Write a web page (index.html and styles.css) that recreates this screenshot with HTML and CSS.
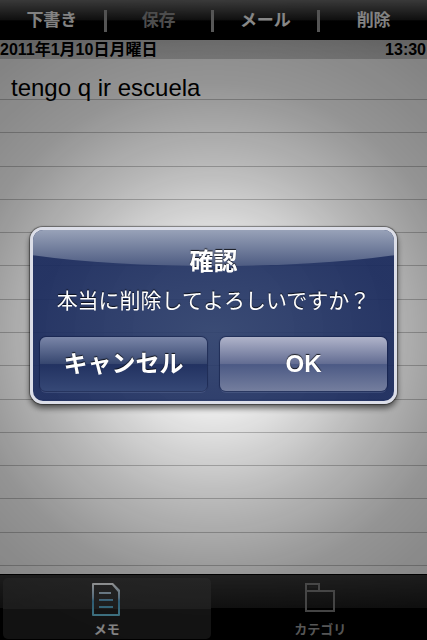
FILE: index.html
```html
<!DOCTYPE html>
<html lang="ja">
<head>
  <meta charset="UTF-8">
  <meta name="viewport" content="width=device-width, initial-scale=1">
  <title>メモ</title>
  <link rel="stylesheet" href="styles.css">
</head>
<body>
  <div class="app">
    <header class="toolbar">
      <button type="button">下書き</button>
      <button type="button" class="inactive">保存</button>
      <button type="button">メール</button>
      <button type="button">削除</button>
    </header>

    <div class="date-bar">
      <span>2011年1月10日月曜日</span>
      <span>13:30</span>
    </div>

    <main class="paper">
      <div class="rules">
        <i></i><i></i><i></i><i></i><i></i><i></i><i></i>
        <i></i><i></i><i></i><i></i><i></i><i></i><i></i>
      </div>
      <textarea class="note" aria-label="メモ">tengo q ir escuela</textarea>
    </main>

    <nav class="tabs">
      <a href="#memo" class="tab active">
        <svg width="30" height="36" viewBox="0 0 30 36">
          <defs>
            <linearGradient id="memoStroke" x1="0" y1="0" x2="0" y2="1">
              <stop offset="0" stop-color="#f2f2f2"/>
              <stop offset="0.45" stop-color="#90b8d4"/>
              <stop offset="0.55" stop-color="#4e9cc4"/>
              <stop offset="1" stop-color="#6cc4de"/>
            </linearGradient>
          </defs>
          <path fill="url(#memoStroke)" fill-rule="evenodd" d="M1 1h20l7 7v25a1 1 0 0 1-1 1H1a1 1 0 0 1-1-1V2a1 1 0 0 1 1-1zM2 3v29h24V10l-6-7zM7 10h12v2H7zM7 17h14v2H7zM7 24h14v2H7z"/>
        </svg>
        <span>メモ</span>
      </a>
      <a href="#category" class="tab">
        <svg width="32" height="36" viewBox="0 0 32 36">
          <path fill="none" stroke="#777" stroke-width="2" d="M2 29V2h13v7h15v20zM2 9h13"/>
          <path fill="none" stroke="#3a3a3a" stroke-width="1" d="M5 5h8"/>
        </svg>
        <span>カテゴリ</span>
      </a>
    </nav>
  </div>

  <div class="overlay">
    <div class="alert" role="alertdialog" aria-labelledby="alertTitle" aria-describedby="alertText">
      <h2 id="alertTitle">確認</h2>
      <p id="alertText">本当に削除してよろしいですか？</p>
      <div class="alert-buttons">
        <button type="button" class="cancel">キャンセル</button>
        <button type="button" class="ok">OK</button>
      </div>
    </div>
  </div>
</body>
</html>
```
FILE: styles.css
```css
* {
  box-sizing: border-box;
}

body {
  margin: 0;
  font-family: "Liberation Sans", "Noto Sans CJK JP", sans-serif;
  background: #000;
}

button {
  border: none;
  font-family: inherit;
  cursor: pointer;
}

.app {
  display: flex;
  flex-direction: column;
  min-height: 100vh;
}

/* top toolbar */
.toolbar {
  display: grid;
  grid-template-columns: repeat(4, 1fr);
  align-items: center;
  height: 40px;
  padding-top: 1px;
  background: linear-gradient(#6a6a6a, #1c1c1c 50%, #000 52%, #000);
}

.toolbar button {
  height: 22px;
  padding: 0;
  background: none;
  color: #f0f0f0;
  font-size: 17px;
  font-weight: bold;
  line-height: 22px;
}

/* the right edge carries the separator */
.toolbar button:not(:last-child) {
  border-right: 3px solid #999;
}

.toolbar .inactive {
  color: #8a8a8a;
}

.date-bar {
  display: flex;
  justify-content: space-between;
  height: 19px;
  padding: 0 1px 0 0;
  background: linear-gradient(#b8b8b8, #c4c4c4);
  color: #000;
  font-size: 16px;
  font-weight: bold;
  line-height: 19px;
}

/* ruled paper */
.paper {
  display: grid;
  flex: 1;
  background: #f2f2f2;
}

.rules,
.note {
  grid-area: 1 / 1;
}

.rules {
  display: flex;
  flex-direction: column;
  padding: 40px 0 8px;
}

.rules i {
  flex: 1;
  border-top: 1px solid #bababa;
}

.rules i:last-child {
  border-bottom: 1px solid #bababa;
}

.note {
  position: relative;
  width: 100%;
  padding: 12px 11px;
  border: none;
  outline: none;
  resize: none;
  background: none;
  color: #000;
  font-family: "Liberation Sans", "Noto Sans CJK JP", sans-serif;
  font-size: 24px;
  line-height: 33px;
}

/* bottom tabs */
.tabs {
  display: grid;
  grid-template-columns: 1fr 1fr;
  height: 66px;
  padding: 3px 0;
  border-top: 1px solid #000;
  background: linear-gradient(#343434, #1c1c1c 50%, #000 51%, #000);
}

.tab {
  display: flex;
  flex-direction: column;
  align-items: center;
  gap: 3px;
  margin: 0 3px;
  padding-top: 4px;
  border-radius: 5px;
  color: #999;
  font-size: 13px;
  font-weight: bold;
  line-height: 18px;
  text-decoration: none;
}

.tab.active {
  background: linear-gradient(#3c3c3c, #343434 50%, #222 51%, #222);
  color: #e8e8e8;
}

/* dimmed backdrop with a bright centre */
.overlay {
  position: fixed;
  inset: 0;
  display: flex;
  align-items: center;
  justify-content: center;
  padding: 0 30px 9px;
  background: radial-gradient(circle at 50% 52%, rgba(0, 0, 0, 0) 0, rgba(0, 0, 0, 0.03) 80px, rgba(0, 0, 0, 0.24) 170px, rgba(0, 0, 0, 0.39) 250px, rgba(0, 0, 0, 0.46) 340px);
}

.alert {
  position: relative;
  width: 100%;
  max-width: 400px;
  padding: 16px 7px 10px;
  border: 3px solid #dcdee8;
  border-radius: 13px;
  overflow: hidden;
  background: radial-gradient(ellipse at 50% 60%, rgba(46, 64, 108, 0.94), rgba(28, 44, 94, 0.94) 75%);
  box-shadow: 0 0 1px 1px rgba(0, 0, 0, 0.4), 0 4px 6px rgba(0, 0, 0, 0.6);
  color: #fff;
  text-align: center;
  text-shadow: 0 -1px 1px rgba(0, 0, 0, 0.8);
}

/* curved gloss over the top of the box */
.alert::before {
  content: "";
  position: absolute;
  top: 0;
  left: -20%;
  width: 140%;
  height: 36px;
  border-bottom-left-radius: 50% 36px;
  border-bottom-right-radius: 50% 36px;
  background: linear-gradient(#98a2b8, #4e5c82);
}

.alert h2,
.alert p,
.alert-buttons {
  position: relative;
  margin: 0;
}

.alert h2 {
  font-size: 24px;
  line-height: 32px;
}

.alert p {
  margin-top: 7px;
  font-family: "Noto Sans CJK JP", sans-serif;
  font-size: 21px;
  font-weight: 400;
  line-height: 28px;
}

.alert-buttons {
  display: grid;
  grid-template-columns: 1fr 1fr;
  gap: 13px;
  margin-top: 24px;
}

.alert-buttons button {
  height: 54px;
  padding: 0;
  border-radius: 6px;
  box-shadow: 0 0 1px 1px rgba(10, 20, 60, 0.5), 0 2px 0 rgba(120, 135, 175, 0.3);
  color: #fff;
  font-size: 24px;
  font-weight: bold;
  line-height: 54px;
  text-shadow: 0 -1px 1px rgba(0, 0, 0, 0.8);
}

.cancel {
  background: linear-gradient(#7a86a8, #36466f 50%, #223261 51%, #364876);
}

.ok {
  background: linear-gradient(#b0b4ca, #626c92 50%, #4c5a85 51%, #747e9e);
}
```
